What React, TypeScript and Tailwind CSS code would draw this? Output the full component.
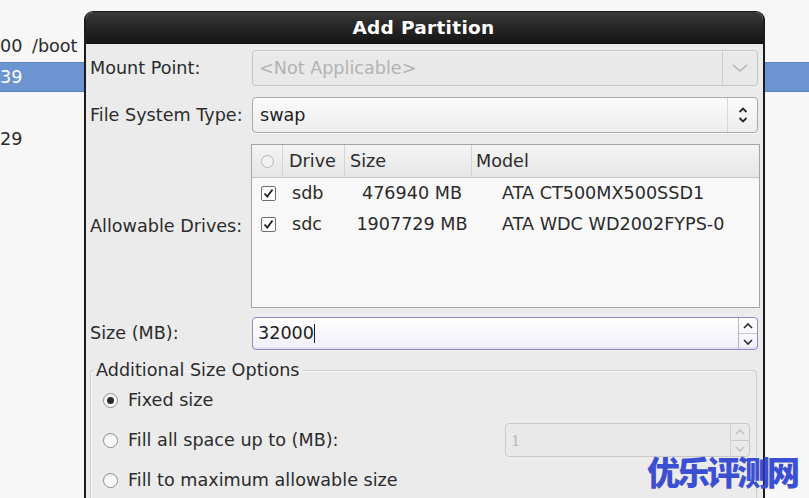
import React from 'react';

const font = { fontFamily: '"DejaVu Sans", "Noto Sans", sans-serif' };

const ChevronDown = ({ color = '#b5b5b5' }: { color?: string }) => (
  <svg width="16" height="8" viewBox="0 0 16 8">
    <path d="M1 1 L8 7 L15 1" fill="none" stroke={color} strokeWidth="1.6" />
  </svg>
);

const UpDown = ({ color = '#2a2a2a' }: { color?: string }) => (
  <svg width="10" height="18" viewBox="0 0 10 18">
    <path d="M1.5 6 L5 2.5 L8.5 6" fill="none" stroke={color} strokeWidth="1.8" />
    <path d="M1.5 12 L5 15.5 L8.5 12" fill="none" stroke={color} strokeWidth="1.8" />
  </svg>
);

const SpinButtons = ({ disabled = false }: { disabled?: boolean }) => {
  const c = disabled ? '#c4c4c4' : '#2a2a2a';
  return (
    <div className={`flex flex-col w-[19px] h-full border-l ${disabled ? 'border-[#d0d0d0]' : 'border-[#b8b8b8]'}`}>
      <div className="flex-1 flex items-center justify-center border-b border-[#c8c8c8]">
        <svg width="10" height="6" viewBox="0 0 10 6">
          <path d="M1 5 L5 1 L9 5" fill="none" stroke={c} strokeWidth="1.6" />
        </svg>
      </div>
      <div className="flex-1 flex items-center justify-center">
        <svg width="10" height="6" viewBox="0 0 10 6">
          <path d="M1 1 L5 5 L9 1" fill="none" stroke={c} strokeWidth="1.6" />
        </svg>
      </div>
    </div>
  );
};

const Check = () => (
  <div className="w-[15px] h-[15px] border border-[#6e6e6e] bg-white flex items-center justify-center rounded-[2px]">
    <svg width="11" height="11" viewBox="0 0 11 11">
      <path d="M1.5 5.5 L4.3 8.6 L9.5 1.5" fill="none" stroke="#1e1e1e" strokeWidth="1.8" />
    </svg>
  </div>
);

const Radio = ({ checked = false }: { checked?: boolean }) => (
  <div className="w-[15px] h-[15px] rounded-full border border-[#8c8c8c] bg-gradient-to-b from-[#f2f2f2] to-white flex items-center justify-center">
    {checked && <div className="w-[7px] h-[7px] rounded-full bg-[#2a2a2a]" />}
  </div>
);

const drives = [
  { name: 'sdb', size: '476940 MB', model: 'ATA CT500MX500SSD1' },
  { name: 'sdc', size: '1907729 MB', model: 'ATA WDC WD2002FYPS-0' },
];

export default function App() {
  return (
    <div className="relative w-[809px] h-[498px] overflow-hidden bg-[#f7f7f7] text-[17.6px] text-[#2b2b2b]" style={font}>
      {/* background partition list */}
      <div className="flex flex-col pt-[31px]">
        <div className="h-[31px] flex items-center">
          <span className="w-[32px]">00</span>
          <span>/boot</span>
        </div>
        <div className="h-[30px] flex items-center bg-[#6b94d0] text-white border-y border-[#5a84c4]">
          <span>39</span>
        </div>
        <div className="h-[31px]" />
        <div className="h-[32px] flex items-center">
          <span>29</span>
        </div>
      </div>

      {/* dialog */}
      <div className="absolute left-[84px] top-[11px] w-[681px] h-[500px] flex flex-col rounded-t-[9px] overflow-hidden border-x-2 border-t border-[#1c1c1c] bg-[#ebebeb]">
        <div className="h-[32px] shrink-0 flex items-center justify-center bg-gradient-to-b from-[#3a3a3a] via-[#262626] to-[#161616] border-b border-[#0e0e0e]">
          <span className="text-white font-bold text-[18.5px] tracking-[0.3px] ml-[-2px]">Add Partition</span>
        </div>

        <div className="flex flex-col pl-[4px] pr-[5px] pt-[6px]">
          {/* mount point */}
          <div className="flex items-center">
            <div className="w-[162px]">Mount Point:</div>
            <div className="flex-1 h-[36px] flex rounded-[4px] border border-[#c2c2c2] bg-[#e9e9e9] shadow-[inset_0_1px_0_#f6f6f6]">
              <div className="flex-1 flex items-center pl-[6px] text-[#b2b2b2]">&lt;Not Applicable&gt;</div>
              <div className="w-[35px] flex items-center justify-center border-l border-[#cfcfcf]">
                <ChevronDown />
              </div>
            </div>
          </div>

          {/* file system type */}
          <div className="flex items-center mt-[11px]">
            <div className="w-[162px]">File System Type:</div>
            <div className="flex-1 h-[36px] flex rounded-[4px] border border-[#a9a9a9] bg-gradient-to-b from-[#fbfbfb] to-[#ededed] shadow-[0_1px_0_#f8f8f8]">
              <div className="flex-1 flex items-center pl-[7px] text-[#1e1e1e]">swap</div>
              <div className="w-[30px] flex items-center justify-center border-l border-[#d8d8d8]">
                <UpDown />
              </div>
            </div>
          </div>

          {/* allowable drives */}
          <div className="flex items-center mt-[11px]">
            <div className="w-[161px]">Allowable Drives:</div>
            <div className="flex-1 mr-[-2px] h-[164px] border border-[#a4a4a4] bg-[#f8f8f8] flex flex-col">
              <div className="h-[33px] flex items-center bg-gradient-to-b from-[#f4f4f4] to-[#e6e6e6] border-b border-[#c4c4c4]">
                <div className="w-[31px] h-full flex items-center justify-center border-r border-[#d4d4d4]">
                  <div className="w-[13px] h-[13px] rounded-full border border-[#b4b4b4] bg-[#f2f2f2]" />
                </div>
                <div className="w-[62px] h-full flex items-center pl-[6px] border-r border-[#d4d4d4]">Drive</div>
                <div className="w-[127px] h-full flex items-center pl-[5px] border-r border-[#d4d4d4]">Size</div>
                <div className="flex-1 h-full flex items-center pl-[4px]">Model</div>
              </div>
              <div className="flex flex-col">
                {drives.map((d) => (
                  <div key={d.name} className="h-[31px] flex items-center">
                    <div className="w-[31px] flex items-center justify-center pl-[2px]">
                      <Check />
                    </div>
                    <div className="w-[62px] pl-[9px]">{d.name}</div>
                    <div className="w-[127px] text-center pl-[7px]">{d.size}</div>
                    <div className="flex-1 pl-[30px]">{d.model}</div>
                  </div>
                ))}
              </div>
            </div>
          </div>

          {/* size */}
          <div className="flex items-center mt-[9px]">
            <div className="w-[162px]">Size (MB):</div>
            <div className="flex-1 h-[33px] flex rounded-[4px] border border-[#8e8cc4] bg-gradient-to-b from-white to-[#f0effa] shadow-[inset_0_-2px_0_#e4e2f6]">
              <div className="flex-1 flex items-center pl-[5px] text-[#1e1e1e]">
                32000<span className="inline-block w-[1px] h-[19px] bg-[#1e1e1e]" />
              </div>
              <SpinButtons />
            </div>
          </div>

          {/* additional size options */}
          <fieldset className="mt-[7px] mr-[1px] border border-[#cdcdcd] rounded-[4px] shadow-[inset_1px_1px_0_#f7f7f7] pb-[20px]">
            <legend className="ml-[3px] px-[2px]">Additional Size Options</legend>
            <div className="flex flex-col pl-[12px] pr-[6px]">
              <div className="h-[40px] flex items-center gap-[10px] mt-[-3px]">
                <Radio checked />
                <span>Fixed size</span>
              </div>
              <div className="h-[40px] flex items-center gap-[10px]">
                <Radio />
                <span className="flex-1">Fill all space up to (MB):</span>
                <div className="w-[245px] h-[34px] flex rounded-[4px] border border-[#c8c8c8] bg-[#e9e9e9]">
                  <div className="flex-1 flex items-center pl-[5px] text-[#b8b8b8]" style={{ fontFamily: '"Liberation Serif", serif' }}>1</div>
                  <SpinButtons disabled />
                </div>
              </div>
              <div className="h-[40px] flex items-center gap-[10px]">
                <Radio />
                <span>Fill to maximum allowable size</span>
              </div>
            </div>
          </fieldset>
        </div>
      </div>

      {/* watermark */}
      <div
        className="absolute right-[12px] bottom-[10px] text-[33px] font-black text-[#3b4fd3] leading-none tracking-[-3px]"
        style={{ fontFamily: '"Noto Sans CJK SC", sans-serif' }}
      >
        优乐评测网
      </div>
    </div>
  );
}
